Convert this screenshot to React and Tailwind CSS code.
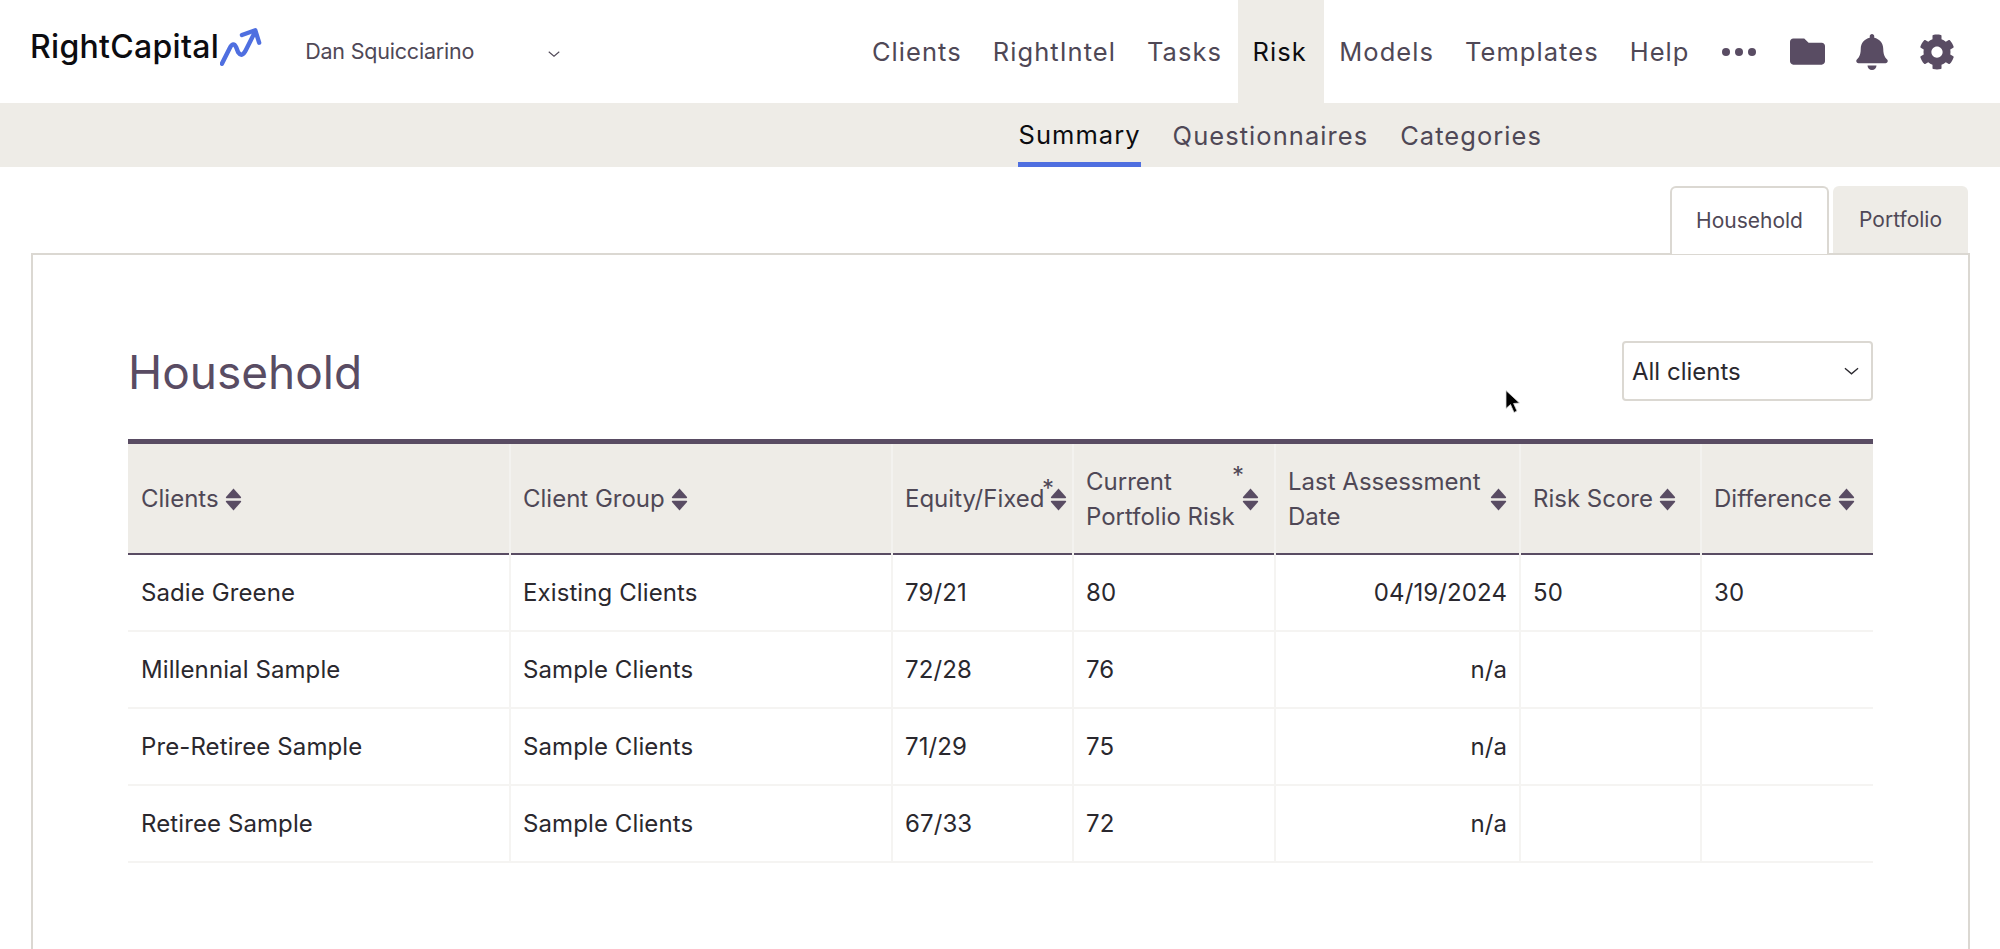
import React from 'react';
import { FaFolder, FaBell, FaCog } from 'react-icons/fa';

const navItems = ['Clients', 'RightIntel', 'Tasks', 'Risk', 'Models', 'Templates', 'Help'];

const rows = [
    { name: 'Sadie Greene', group: 'Existing Clients', equity: '79/21', current: '80', date: '04/19/2024', score: '50', diff: '30' },
    { name: 'Millennial Sample', group: 'Sample Clients', equity: '72/28', current: '76', date: 'n/a', score: '', diff: '' },
    { name: 'Pre-Retiree Sample', group: 'Sample Clients', equity: '71/29', current: '75', date: 'n/a', score: '', diff: '' },
    { name: 'Retiree Sample', group: 'Sample Clients', equity: '67/33', current: '72', date: 'n/a', score: '', diff: '' },
];

const SortIcon = () => (
    <svg viewBox="0 0 17 23" className="w-[17px] h-[23px] shrink-0 fill-[#594c63]">
        <path d="M8.5 0.5 L16 9 a0.8 0.8 0 0 1 -0.6 1.2 H1.6 A0.8 0.8 0 0 1 1 9 Z" />
        <path d="M8.5 22.5 L16 14 a0.8 0.8 0 0 0 -0.6 -1.2 H1.6 A0.8 0.8 0 0 0 1 14 Z" />
    </svg>
);

const Chevron = ({ className }) => (
    <svg viewBox="0 0 16 8" fill="none" className={className}>
        <path d="M1 1 L8 7 L15 1" stroke="currentColor" strokeWidth="1.4" />
    </svg>
);

const Logo = () => (
    <div className="flex items-start">
        <span className="text-[32px] leading-[36px] font-medium text-[#0c0c10] tracking-[0.3px] mt-[3px]">RightCapital</span>
        <svg viewBox="0 0 44 40" fill="none" className="w-[42px] h-[39px] ml-[1px] mt-[1px]">
            <path d="M2 38 L10 22 Q14 14 17 21 L19 26 Q23 32 27 24 L36 6" stroke="#4f6fe0" strokeWidth="4.6" strokeLinecap="round" />
            <path d="M23 8 L37 3 L41 16" stroke="#4f6fe0" strokeWidth="4.6" strokeLinecap="round" strokeLinejoin="round" />
        </svg>
    </div>
);

function HeaderCell({ children, sup, two, sortClass }) {
    return (
        <th className="font-normal text-left align-middle pl-[12px] first:pl-[13px] pr-[12px] pt-[2px] border-l-2 first:border-l-0 border-[#f3f2ef]">
            <div className="flex items-center relative">
                <span className={two ? 'leading-[35px]' : ''}>{children}</span>
                {sup && <span className={`absolute text-[24px] leading-none ${sup}`}>*</span>}
                <span className={sortClass || 'ml-[6px]'}><SortIcon /></span>
            </div>
        </th>
    );
}

export default function App() {
    return (
        <div className="h-screen overflow-hidden relative bg-white text-[#2a282e] font-['Inter',sans-serif]">

            {/* Top nav */}
            <div className="h-[103px] flex items-stretch">
                <div className="ml-[30px] mt-[26px]">
                    <Logo />
                </div>
                <div className="flex items-center ml-[43px] text-[21.5px] tracking-[-0.2px] text-[#4f4856] w-[255px]">
                    <span>Dan Squicciarino</span>
                    <Chevron className="w-[12px] h-[6px] ml-auto mt-[4px]" />
                </div>
                <div className="ml-auto flex items-stretch mr-[45px]">
                    {navItems.map(item => (
                        <div
                            key={item}
                            className={`flex items-center pt-[2px] text-[25.5px] tracking-[1.05px] ${item === 'Risk' ? 'pl-[15px] pr-[17px] bg-[#eeece7] text-[#0c0c10]' : 'px-[15.5px] text-[#4f4856]'}`}
                        >
                            {item}
                        </div>
                    ))}
                    <div className="flex items-center gap-[5px] ml-[17px]">
                        <span className="w-[8px] h-[8px] rounded-full bg-[#594c63]" />
                        <span className="w-[8px] h-[8px] rounded-full bg-[#594c63]" />
                        <span className="w-[8px] h-[8px] rounded-full bg-[#594c63]" />
                    </div>
                    <div className="flex items-center text-[#594c63] ml-[34px] gap-[29px]">
                        <FaFolder className="w-[35px] h-[35px]" />
                        <FaBell className="w-[36px] h-[36px]" />
                        <FaCog className="w-[36px] h-[36px]" />
                    </div>
                </div>
            </div>

            {/* Sub nav */}
            <div className="h-[64px] bg-[#eeece7] flex justify-end pr-[458px] gap-[32px] text-[25.5px] tracking-[1.05px] text-[#4f4856]">
                <div className="flex items-center h-full border-b-[5px] border-[#4f6fe0] text-[#0c0c10] pt-[6px]">Summary</div>
                <div className="flex items-center h-full pt-[2px]">Questionnaires</div>
                <div className="flex items-center h-full pt-[2px]">Categories</div>
            </div>

            {/* Tabs */}
            <div className="flex justify-end gap-[4px] pr-[32px] pt-[19px] text-[21px] text-[#4f4856] relative z-10">
                <div className="w-[159px] h-[68px] -mb-[1px] flex items-center justify-center bg-white border-2 border-b-0 border-[#dbd8d2] rounded-t-[6px]">Household</div>
                <div className="w-[135px] h-[67px] flex items-center justify-center bg-[#eeece7] rounded-t-[6px]">Portfolio</div>
            </div>

            {/* Panel */}
            <div className="ml-[31px] w-[1939px] h-[800px] border-2 border-[#dbd8d2] pl-[95px] pt-[86px]">
                <div className="w-[1745px] flex items-center justify-between h-[60px] mb-[38px]">
                    <h1 className="text-[46px] leading-none text-[#594c63] pt-[2px]">Household</h1>
                    <div className="w-[251px] h-[60px] border-2 border-[#dbd8d2] rounded-[4px] flex items-center justify-between pl-[8px] pr-[12px] text-[24px] text-[#2a282e]">
                        <span className="pt-[2px]">All clients</span>
                        <Chevron className="w-[15px] h-[8px]" />
                    </div>
                </div>

                <table className="table-fixed w-[1745px] border-collapse border-t-[5px] border-[#594c63] text-[24px]">
                    <colgroup>
                        <col className="w-[382px]" />
                        <col className="w-[382px]" />
                        <col className="w-[181px]" />
                        <col className="w-[202px]" />
                        <col className="w-[245px]" />
                        <col className="w-[181px]" />
                        <col className="w-[172px]" />
                    </colgroup>
                    <thead>
                        <tr className="h-[112px] bg-[#eeece7] border-b-2 border-[#594c63] text-[#4f4856]">
                            <HeaderCell>Clients</HeaderCell>
                            <HeaderCell>Client Group</HeaderCell>
                            <HeaderCell sup="left-[137px] top-[-4px]">Equity/Fixed</HeaderCell>
                            <HeaderCell two sup="left-[146px] top-[0px]" sortClass="ml-auto mr-[3px]">Current<br />Portfolio Risk</HeaderCell>
                            <HeaderCell two sortClass="ml-auto">Last Assessment<br />Date</HeaderCell>
                            <HeaderCell>Risk Score</HeaderCell>
                            <HeaderCell>Difference</HeaderCell>
                        </tr>
                    </thead>
                    <tbody className="tracking-[0.1px]">
                        {rows.map(r => (
                            <tr key={r.name} className="h-[77px] border-b-2 border-[#f5f4f2]">
                                <td className="px-[13px] pt-[2px]">{r.name}</td>
                                <td className="px-[12px] pt-[2px] border-l-2 border-[#f5f4f2]">{r.group}</td>
                                <td className="px-[12px] pt-[2px] border-l-2 border-[#f5f4f2]">{r.equity}</td>
                                <td className="px-[12px] pt-[2px] border-l-2 border-[#f5f4f2]">{r.current}</td>
                                <td className="px-[12px] pt-[2px] border-l-2 border-[#f5f4f2] text-right">{r.date}</td>
                                <td className="px-[12px] pt-[2px] border-l-2 border-[#f5f4f2]">{r.score}</td>
                                <td className="px-[12px] pt-[2px] border-l-2 border-[#f5f4f2]">{r.diff}</td>
                            </tr>
                        ))}
                    </tbody>
                </table>
            </div>

            {/* Mouse cursor */}
            <svg viewBox="0 0 18 26" className="absolute left-[1505px] top-[389px] w-[18px] h-[27px]">
                <path d="M1 1 L1 19 L5.5 15 L9 23 L12 21.5 L8.6 14 L14.5 13.5 Z" fill="#000" stroke="#ddd" strokeWidth="0.8" />
            </svg>
        </div>
    );
}
